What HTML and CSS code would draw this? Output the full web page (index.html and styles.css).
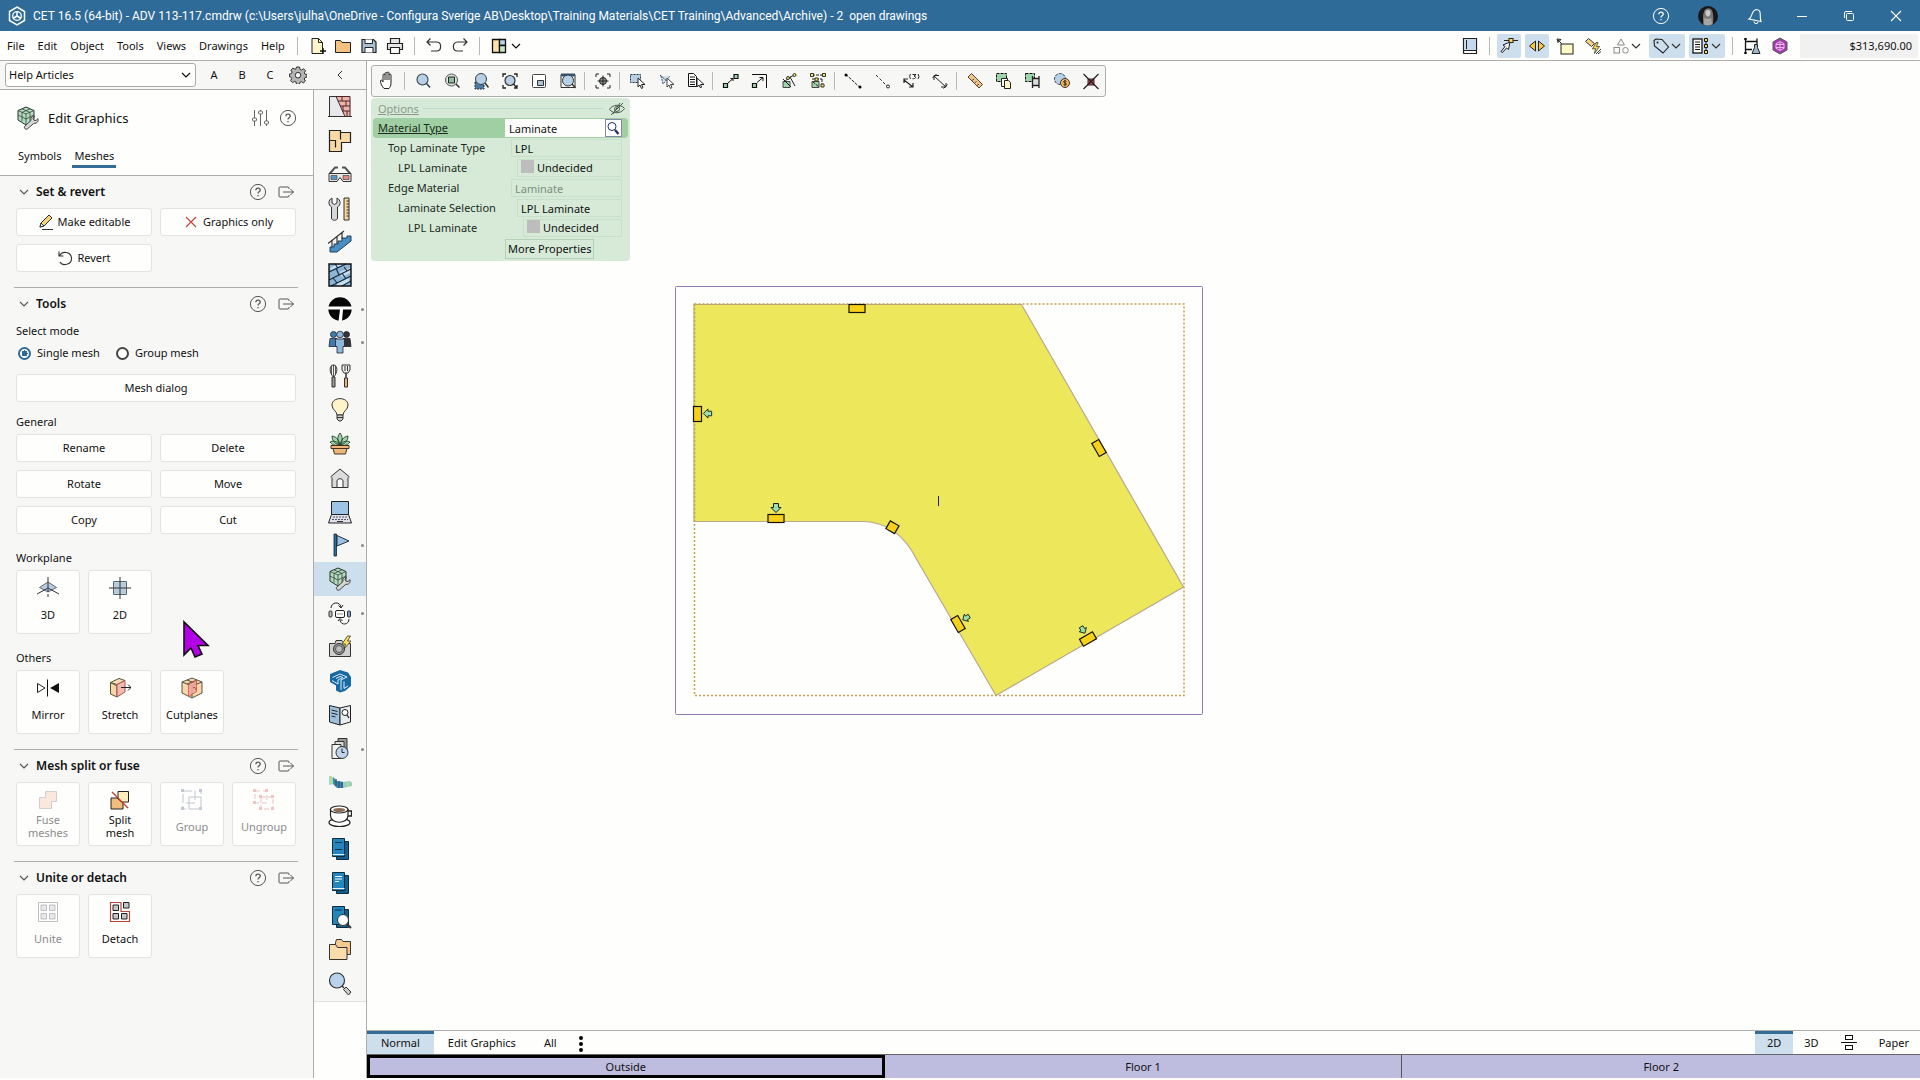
FILE: index.html
```html
<!DOCTYPE html>
<html lang="en">
<head>
<meta charset="utf-8">
<title>CET 16.5 (64-bit)</title>
<link rel="stylesheet" href="styles.css">
</head>
<body>
<svg class="defs" aria-hidden="true">
  <symbol id="help" viewBox="0 0 18 18"><g fill="none" stroke="currentColor"><circle cx="9" cy="9" r="7.6"/><path d="M6.9 7.2c0-2.8 4.3-2.8 4.3 0 0 1.700-2.200 1.500-2.200 3.300M9 12v1.300" stroke-width="1.300"/></g></symbol>
  <symbol id="export" viewBox="0 0 18 18"><path d="M12 6V5q0-1-1-1H3Q2 4 2 5v8q0 1 1 1h8q1 0 1-1v-1M6 9h10.500M13.500 6l3 3-3 3" fill="none" stroke="currentColor"/></symbol>
  <symbol id="down" viewBox="0 0 12 12"><path d="M2 4l4 4 4-4" fill="none" stroke="currentColor" stroke-width="1.200"/></symbol>
  <symbol id="cubewrench" viewBox="0 0 24 24"><path d="M10 1l8 3.500v9L10 19l-8-5V4.500z" fill="#b5dcc0" stroke="#26352c" stroke-width="1"/><path d="M2 4.500L10 8l8-3.500M10 8v11M6 2.800l8 3.700v9M14 2.800L6 6.500v9M2 9l8 4 8-4" fill="none" stroke="#33463a" stroke-width=".8"/><path d="M8.500 20.500l6.500-6c-.7-2.500 1-4.500 3.500-4.300l-1.500 2.300 1 1.800 2.300.2 1.500-2c1.200 2.800-.8 5.200-4 4.800l-6.500 5.700c-1.500 1-3.500-.9-2.800-2.500z" fill="#d5d9d6" stroke="#444" stroke-width="1"/></symbol>
  <symbol id="lens" viewBox="0 0 20 20"><circle cx="9.500" cy="8.500" r="5.500" fill="#b7d0e6" stroke="#33414c" stroke-width="1.100"/><path d="M13.500 12.500L17 16.500" stroke="#33414c" stroke-width="1.500"/></symbol>
  <symbol id="arrow" viewBox="0 0 12 12"><path d="M6 10.500L1 5.500h2.500v-4h5v4H11z" fill="#9fdcae" stroke="#10261a"/></symbol>
</svg>

<header class="titlebar">
  <svg class="logo" width="18" height="20" viewBox="0 0 18 20"><path d="M9 1l7.500 4.500v9L9 19l-7.500-4.500v-9z" fill="none" stroke="#fff" stroke-width="1.500"/><circle cx="9" cy="10" r="4.300" fill="none" stroke="#fff" stroke-width="1.300"/><path d="M9 10V5.500M9 10l-4 2.500M9 10l4 2.500" stroke="#fff" stroke-width="1.500"/></svg>
  <h1 class="title">CET 16.5 (64-bit) - ADV 113-117.cmdrw (c:\Users\julha\OneDrive - Configura Sverige AB\Desktop\Training Materials\CET Training\Advanced\Archive) - 2&nbsp; open drawings</h1>
  <div class="window-tools">
    <button aria-label="Help"><svg width="18" height="18"><use href="#help"/></svg></button>
    <button aria-label="Account"><svg width="20" height="20" viewBox="0 0 20 20"><circle cx="10" cy="10" r="10" fill="#171717"/><path d="M5.500 18c-1-5-.5-11 1-13.500 2-3 6-3 7.500 0 1.500 3 1.500 9 1 13.500-3 2.500-7 2.500-9.500 0z" fill="#777"/><path d="M7.500 5.500c1-2 4-2 4.800 0 .4 3-.6 5-2.300 5S7.200 8.500 7.500 5.500z" fill="#c9c9c9"/><path d="M6.500 12l3.500 1 3-1 1 6c-2 1.500-6 1.500-8.500.5z" fill="#a5a5a5"/></svg></button>
    <button aria-label="Notifications"><svg width="18" height="18" viewBox="0 0 18 18"><path d="M3 12C7 10 5 3 10.500 2.500c6 .5 2.500 7 4.500 12zM8 14.500c.5 2.500 3.500 2.800 4 .5" fill="none" stroke="#fff" stroke-width="1.100"/></svg></button>
    <button aria-label="Minimize"><svg width="12" height="12"><path d="M1 6.500h10" stroke="#fff"/></svg></button>
    <button aria-label="Restore"><svg width="12" height="12" fill="none" stroke="#fff"><rect x="3.500" y="3.500" width="7" height="7" rx="1"/><path d="M1.500 8V3q0-1.500 1.500-1.500h6"/></svg></button>
    <button aria-label="Close"><svg width="12" height="12"><path d="M1 1l10 10M11 1L1 11" stroke="#fff" stroke-width="1.100"/></svg></button>
  </div>
</header>

<nav class="menubar">
  <div class="menus">
    <button>File</button><button>Edit</button><button>Object</button><button>Tools</button><button>Views</button><button>Drawings</button><button>Help</button>
  </div>
  <span class="sep"></span>
  <div class="tools">
    <button aria-label="New"><svg viewBox="0 0 18 18"><path d="M4 1.500h6.500l4 4v11H4z" fill="#fff6cc" stroke="#222"/><path d="M10.500 1.500v4h4" fill="none" stroke="#222"/><path d="M15 11v6M12 14h6" stroke="#111" stroke-width="1.400"/></svg></button>
    <button aria-label="Open"><svg viewBox="0 0 18 18"><path d="M1.500 3.500h5l1.500 2h8.500v10h-15z" fill="#f2c27e" stroke="#222"/></svg></button>
    <button aria-label="Save"><svg viewBox="0 0 18 18"><path d="M2 2.500h11.500L16 5v10.500H2z" fill="#a9bfd2" stroke="#222" stroke-width="1.200"/><path d="M5 2.500v4h7.500v-4M5 15.500v-5h8v5" fill="#fff" stroke="#222"/></svg></button>
    <button aria-label="Print"><svg viewBox="0 0 18 18"><path d="M4.500 6.500v-5h9v5M4 12.500H1.500v-6h15v6H14" fill="#e6e6e6" stroke="#222" stroke-width="1.200"/><path d="M4.500 10.500h9v6h-9z" fill="#fff" stroke="#222" stroke-width="1.200"/></svg></button>
  </div>
  <span class="sep"></span>
  <div class="tools">
    <button aria-label="Undo"><svg viewBox="0 0 18 18"><path d="M5.500 1.500L2 5l3.500 3.500M2 5h9.500c5.500 0 5.500 9 0 9H6" fill="none" stroke="#333" stroke-width="1.200"/></svg></button>
    <button aria-label="Redo"><svg viewBox="0 0 18 18"><path d="M12.500 1.500L16 5l-3.500 3.500M16 5H6.500c-5.500 0-5.500 9 0 9H12" fill="none" stroke="#333" stroke-width="1.200"/></svg></button>
  </div>
  <span class="sep"></span>
  <button class="split" aria-label="Layout"><svg width="18" height="18" viewBox="0 0 18 18"><path d="M2.500 2.500h7v13h-7z" fill="#ffe3a6" stroke="#111" stroke-width="1.300"/><path d="M9.500 2.500h6v6h-6z" fill="#b8d3ea" stroke="#111" stroke-width="1.300"/><path d="M9.500 8.500h6v7h-6z" fill="#c9e4c9" stroke="#111" stroke-width="1.300"/></svg><svg width="12" height="12"><use href="#down"/></svg></button>

  <div class="right-tools">
    <button aria-label="Catalogue"><svg viewBox="0 0 18 18"><path d="M2.500 1.500h13v15h-12q-1 0-1-1z" fill="#fff" stroke="#222" stroke-width="1.200"/><path d="M3 2h12v11H3z" fill="#c4daec"/><path d="M2.500 13.500h13M5.500 12v-9" stroke="#222"/></svg></button>
    <span class="sep"></span>
    <button class="on" aria-label="Snap"><svg viewBox="0 0 18 18"><path d="M4 3.500h14" stroke="#222"/><rect x="9" y="1.500" width="4" height="4" fill="#ffd84a" stroke="#222"/><path d="M10 5L3 8l2 1.500-4 5 1.500 1 4-4.500 2 1.500z" fill="#eef" stroke="#222"/></svg></button>
    <button class="on" aria-label="Handles"><svg viewBox="0 0 18 18"><path d="M7.500 4v10L1.500 9zM10.500 4v10l6-5z" fill="#f8c93d" stroke="#222"/></svg></button>
    <button aria-label="Label"><svg viewBox="0 0 18 18"><rect x="5" y="7" width="12" height="10" fill="#fff9c6" stroke="#222"/><path d="M2 3l4 4M1 2l4 .5L2 5.500z" stroke="#222" fill="#ddd"/></svg></button>
    <button aria-label="Quick apply"><svg viewBox="0 0 18 18"><path d="M1.500 4.500l3-3 6 5-3 3z" fill="#f5d488" stroke="#333"/><path d="M12 5.500L8.500 12l3-.5-1 5 5-7h-3l1.500-4z" fill="#ffd84a" stroke="#333" stroke-width=".8"/><path d="M12 17l5-5M14 17l3-2.500" stroke="#333"/></svg></button>
    <button class="split" aria-label="Shapes"><svg viewBox="0 0 18 18"><g fill="none" stroke="#888"><path d="M9 2l3.500 6h-7z"/><rect x="2" y="10.500" width="5.500" height="5.500"/><circle cx="13.500" cy="13.300" r="2.800"/></g></svg><svg width="12" height="12"><use href="#down"/></svg></button>
    <button class="on split" aria-label="Tags"><svg viewBox="0 0 18 18"><path d="M2 3.500L4 2l6 .5 6.500 7.500-5.500 6L2.500 9z" fill="none" stroke="#222" stroke-width="1.100"/><circle cx="5.500" cy="5.500" r="1" fill="#222"/></svg><svg width="12" height="12"><use href="#down"/></svg></button>
    <button class="on split" aria-label="Lists"><svg viewBox="0 0 18 18"><rect x="1" y="2" width="9" height="14" fill="#fff" stroke="#111" stroke-width="1.300"/><path d="M3 5h5M3 7.500h5M3 10h5M3 12.500h5" stroke="#111"/><path d="M14 2v14" stroke="#111"/><path d="M12.500 1.500h3v3h-3zM12.500 7.500h3v3h-3zM12.500 13.500h3v3h-3z" fill="#ffe24a" stroke="#111"/></svg><svg width="12" height="12"><use href="#down"/></svg></button>
    <span class="sep"></span>
    <button aria-label="Lab"><svg viewBox="0 0 18 18"><path d="M2.500 1v16M1 2h3M1 16h3M2.500 4.500H14M2.500 12.500H9M14 1.500v6" stroke="#111" stroke-width="1.300"/><path d="M11.500 7.500h3v3l2.500 6H9l2.500-6z" fill="#9eb6d0" stroke="#222"/></svg></button>
    <button aria-label="Store"><svg viewBox="0 0 18 18"><path d="M9 1l7 4v8l-7 4-7-4V5z" fill="#a03db0" stroke="#555"/><path d="M9 4.500l4 2.300v4.400l-4 2.300-4-2.300V6.800zM5 7.500h8M5 10.500h8M9 5v8" fill="none" stroke="#efb6f0"/></svg></button>
    <output class="price">$313,690.00</output>
  </div>
</nav>

<div class="workspace">
  <section class="dock">
    <div class="dock-bar">
      <select aria-label="Toolbox"><option>Help Articles</option></select>
      <svg class="select-arrow" width="12" height="12"><use href="#down"/></svg>
      <button>A</button><button>B</button><button>C</button>
      <button aria-label="Settings"><svg width="18" height="18" viewBox="0 0 18 18"><path d="M7.500 1h3l.5 2.300 1.500.7 2.200-1.200 1.800 2-1.200 2 .6 1.200 2.100.5v2.500l-2.200.6-.6 1.400 1.200 2-2 1.900-2-1.200-1.500.6-.4 2H7.500L7 16l-1.500-.6-2 1.200-2-2 1.200-2-.5-1.300L.5 10.700V8l2-.5.6-1.500-1.200-2 2-1.900L6 3.300l1-.5z" fill="#b5b5b5" stroke="#333"/><circle cx="9" cy="9.200" r="2.800" fill="#f2f2f2" stroke="#333"/></svg></button>
      <button class="collapse" aria-label="Collapse"><svg width="10" height="12"><path d="M7 2L3 6l4 4" fill="none" stroke="#333"/></svg></button>
    </div>

    <div class="dock-body">
      <aside class="panel">
        <div class="panel-head">
          <div class="panel-title">
            <svg width="24" height="24"><use href="#cubewrench"/></svg>
            <h2>Edit Graphics</h2>
            <button aria-label="Adjust"><svg width="18" height="18" viewBox="0 0 18 18"><g fill="none" stroke="#666"><path d="M3.500 1v8M3.500 12v5M9.500 1v1M9.500 5v12M15.500 1v11M15.500 15v2"/><rect x="1.500" y="9" width="4" height="3" rx="1"/><rect x="7.500" y="2" width="4" height="3" rx="1"/><rect x="13.500" y="12" width="4" height="3" rx="1"/></g></svg></button>
            <button aria-label="Help"><svg width="18" height="18"><use href="#help"/></svg></button>
          </div>
          <div class="tabs"><button>Symbols</button><button class="active">Meshes</button></div>
        </div>

        <section class="group">
          <header><svg width="12" height="12"><use href="#down"/></svg><h3>Set &amp; revert</h3><button aria-label="Help"><svg width="18" height="18"><use href="#help"/></svg></button><button aria-label="Detach section"><svg width="18" height="18"><use href="#export"/></svg></button></header>
          <div class="pair">
            <button class="btn"><svg width="16" height="16" viewBox="0 0 16 16"><path d="M2 13l1-4 8-8 3 3-8 8z" fill="#f3d37c" stroke="#333"/><path d="M2 13l1-4 3 3z" fill="#fff" stroke="#333"/><path d="M4 15.500h11" stroke="#333"/></svg>Make editable</button>
            <button class="btn"><svg width="16" height="16" viewBox="0 0 16 16"><path d="M3 3l10 10M13 3L3 13" stroke="#c5483c" stroke-width="1.200"/></svg>Graphics only</button>
            <button class="btn"><svg width="16" height="16" viewBox="0 0 16 16"><path d="M2 1.500v4.500h4.500M2.500 6C5 .5 14 1.500 14.500 8c.3 7-9 8.500-11.500 4" fill="none" stroke="#333" stroke-width="1.100"/></svg>Revert</button>
          </div>
        </section>

        <section class="group">
          <header><svg width="12" height="12"><use href="#down"/></svg><h3>Tools</h3><button aria-label="Help"><svg width="18" height="18"><use href="#help"/></svg></button><button aria-label="Detach section"><svg width="18" height="18"><use href="#export"/></svg></button></header>
          <h4>Select mode</h4>
          <div class="radios">
            <label><input type="radio" name="mode" checked>Single mesh</label>
            <label><input type="radio" name="mode">Group mesh</label>
          </div>
          <button class="btn wide">Mesh dialog</button>
          <h4 class="tight">General</h4>
          <div class="pair">
            <button class="btn">Rename</button><button class="btn">Delete</button>
            <button class="btn">Rotate</button><button class="btn">Move</button>
            <button class="btn">Copy</button><button class="btn">Cut</button>
          </div>
          <h4 class="spaced">Workplane</h4>
          <div class="tiles">
            <button class="tile"><svg viewBox="0 0 22 22"><path d="M11 5l8.500 5.500L11 15l-8.500-4.500z" fill="#b7cddd" stroke="#5b6a75"/><path d="M11 0v11M11 11l11 6M11 11L0 17" fill="none" stroke="#333"/><path d="M11 12v10" stroke="#333" stroke-dasharray="3 2"/></svg><span>3D</span></button>
            <button class="tile"><svg viewBox="0 0 22 22"><path d="M4.500 4.500h13v13h-13z" fill="#b7cddd" stroke="#5b6a75"/><path d="M11 0v22M0 11h22" stroke="#333"/></svg><span>2D</span></button>
          </div>
          <h4 class="spaced">Others</h4>
          <div class="tiles">
            <button class="tile"><svg viewBox="0 0 22 22"><path d="M.5 6.500L8 11l-7.500 4.500z" fill="#fff" stroke="#222"/><path d="M22 6v10l-9-5z" fill="#111"/><path d="M10.500 2.500v17" stroke="#111"/></svg><span>Mirror</span></button>
            <button class="tile"><svg viewBox="0 0 22 22"><path d="M1.500 5.500L8 9v11l-6.500-3z" fill="#f8d6a8" stroke="#553"/><path d="M1.500 5.500L10 1.500l6 2L8 7.500z" fill="#f8dfb8" stroke="#553"/><path d="M8 7.500l8-4V15l-8 5z" fill="#f4b9ae" stroke="#a55"/><path d="M12 10.500h10M19 7.500l3 3-3 3" fill="none" stroke="#222"/></svg><span>Stretch</span></button>
            <button class="tile"><svg viewBox="0 0 22 22"><path d="M11 1l10 4v11l-10 5-10-5V5z" fill="#f8d6a8" stroke="#554"/><path d="M1 5l10 4 10-4M11 9v12M6 3l10 4M16 3L6 7" fill="none" stroke="#554"/><path d="M7.500 7.500l8-4v11l-8 5z" fill="#f0a79c" stroke="#c55" opacity=".85"/><path d="M12 11l3-1v5" fill="none" stroke="#a33" stroke-dasharray="2"/></svg><span>Cutplanes</span></button>
          </div>
        </section>

        <section class="group">
          <header><svg width="12" height="12"><use href="#down"/></svg><h3>Mesh split or fuse</h3><button aria-label="Help"><svg width="18" height="18"><use href="#help"/></svg></button><button aria-label="Detach section"><svg width="18" height="18"><use href="#export"/></svg></button></header>
          <div class="tiles">
            <button class="tile" disabled><svg viewBox="0 0 22 22"><path d="M8.500 2.500h11v10h-5v7h-12v-11h6z" fill="#f7c9ad" stroke="#888"/></svg><span>Fuse<br>meshes</span></button>
            <button class="tile"><svg viewBox="0 0 22 22"><path d="M9 2.500h10.500V13H9z" fill="#ffedbd" stroke="#222"/><path d="M2 9h6l6 5v6H2z" fill="#f0bd7c" stroke="#222"/><path d="M3 3l16 16" stroke="#b73b31" stroke-width="1.300"/></svg><span>Split<br>mesh</span></button>
            <button class="tile" disabled><svg viewBox="0 0 22 22"><g fill="none" stroke="#6b7a90"><path d="M2 2h12v12H2z" stroke-dasharray="9 3"/><path d="M8 8h12v12H8z"/><path d="M18 2h2v3M2 17v3h3"/></g><path d="M0 0h3v3H0zM18 0h3v3h-3zM0 18h3v3H0zM18 18h3v3h-3z" fill="#6b7a90"/></svg><span>Group</span></button>
            <button class="tile" disabled><svg viewBox="0 0 22 22"><g fill="none" stroke="#e07070"><path d="M2 2h12v12H2z" stroke-dasharray="5 3"/><path d="M8 8h12v12H8z" stroke-dasharray="5 2"/></g><path d="M0 0h3v3H0zM12 0h3v3h-3zM0 12h3v3H0zM18 6h3v3h-3zM6 6h3v3H6zM6 18h3v3H6zM18 18h3v3h-3z" fill="#e07070"/></svg><span>Ungroup</span></button>
          </div>
        </section>

        <section class="group">
          <header><svg width="12" height="12"><use href="#down"/></svg><h3>Unite or detach</h3><button aria-label="Help"><svg width="18" height="18"><use href="#help"/></svg></button><button aria-label="Detach section"><svg width="18" height="18"><use href="#export"/></svg></button></header>
          <div class="tiles">
            <button class="tile" disabled><svg viewBox="0 0 22 22"><path d="M1.500 1.500h19v19h-19z" fill="none" stroke="#667"/><path d="M4 4h5.500v5.500H4zM12.500 4H18v5.500h-5.500zM4 12.500h5.500V18H4zM12.500 12.500H18V18h-5.500z" fill="#ccc" stroke="#667"/></svg><span>Unite</span></button>
            <button class="tile"><svg viewBox="0 0 22 22"><path d="M1.500 1.500H12v9h8.500v10h-19z" fill="none" stroke="#b8473b" stroke-width="1.200"/><path d="M4 4h5.500v5.500H4zM14.500 1.500H20v5.500h-5.500zM4 12.500h5.500V18H4zM12.500 12.500H18V18h-5.500z" fill="#c6c6c6" stroke="#222"/></svg><span>Detach</span></button>
          </div>
        </section>
      </aside>

      <nav class="rail">
        <div class="rail-group">
          <button aria-label="Walls"><svg viewBox="0 0 24 24"><path d="M1 1.500h22v20H1z" fill="#e9e9ec"/><path d="M8 1.500h14v20h-5z" fill="#f0b3ab"/><path d="M8 1.500h14v20M10 6h12M12 11h10M14 16h8M14 2v4M18 6v5M15 11v5M19 16v5" fill="none" stroke="#4a2524"/><path d="M1.500 21V1.500H8L17 21.500M0 21.500h24" fill="none" stroke="#333"/></svg></button>
          <button aria-label="Floors"><svg viewBox="0 0 24 24"><path d="M1.500 1.500h11v2h10v10h-9v9h-12z" fill="#f9d9a4" stroke="#222" stroke-width="1.200"/><path d="M12.500 3.500v7M7.500 18.500v-7h-6" fill="none" stroke="#222" stroke-width="1.200"/></svg></button>
          <button aria-label="3D glasses"><svg viewBox="0 0 24 24"><path d="M1.500 11L7 4.500h3M22.500 11L17 4.500h-3" fill="none" stroke="#555" stroke-width="2"/><path d="M1 10.500h22v8h-8l-3-4-3 4H1z" fill="#e8e8e8" stroke="#333"/><path d="M3 12.500h6v4H3z" fill="#5b9ac8" stroke="#333" stroke-width=".6"/><path d="M15 12.500h6v4h-6z" fill="#e58b80" stroke="#333" stroke-width=".6"/></svg></button>
          <button aria-label="Tools"><svg viewBox="0 0 24 24"><path d="M4 1v5l2.500 1.500L9 6V1c4 2 4 7 .5 9v11c0 3-6 3-6 0V10C0 8 0 3 4 1z" fill="#d6d9dc" stroke="#333"/><path d="M16 1h5v22h-5z" fill="#f7d79b" stroke="#333"/><path d="M18.500 4H21M18.500 7H21M18.500 10H21M18.500 13H21M18.500 16H21M18.500 19H21" stroke="#333"/></svg></button>
        </div>
        <div class="rail-group">
          <button aria-label="Stairs"><svg viewBox="0 0 24 24"><path d="M2 20v-3h4v-3h4v-3h4V8h5V6h4v5L9 22H2z" fill="#4a8fc4" stroke="#1e3e58"/><path d="M0 13.500L16 1M4 10.500V17M9 7v7M14 3v6" stroke="#333" stroke-width="1.200"/></svg></button>
        </div>
        <div class="rail-group">
          <button aria-label="Flooring"><svg viewBox="0 0 24 24"><path d="M1 1h22v22H1z" fill="#8bb4d6"/><path d="M12 9l10-4v5l-8 4zM2 5l8-4h6L3 7zM9 20l12-5v5l-6 3H9z" fill="#c7ddf0"/><path d="M1 9l17-8M1 17L23 6M3 23l20-10M14 23l9-5M7 1l3 4M16 4l3 4M8 5l3 7M5 15l4 5M14 10l4 6" stroke="#152736" stroke-width="1.100" fill="none"/><path d="M1 1h22v22H1z" fill="none" stroke="#111" stroke-width="1.400"/></svg></button>
          <button class="more" aria-label="Brand T"><svg viewBox="0 0 24 24"><circle cx="12" cy="12" r="11.700" fill="#060606"/><path d="M0 9.500h24v3h-9L14 24h-3.500l1.500-11.500H0z" fill="#fff"/></svg></button>
        </div>
        <div class="rail-group">
          <button class="more" aria-label="People"><svg viewBox="0 0 24 24"><g stroke="#223" stroke-width=".8"><circle cx="5.500" cy="4.500" r="3" fill="#3f7cab"/><path d="M2 8.500h7v8H1z" fill="#3f7cab"/><circle cx="18.500" cy="4.500" r="3" fill="#333"/><path d="M15 8.500h7l1 8h-8z" fill="#333"/><circle cx="12" cy="4.500" r="3.300" fill="#8fb7da"/><path d="M7.500 9h9v7.500H15V23H9v-6.500H7.500z" fill="#8fb7da"/></g></svg></button>
          <button aria-label="Kitchen"><svg viewBox="0 0 24 24"><path d="M5.500 13C1 9 1 1 5.500 1S10 9 5.500 13z" fill="#eee" stroke="#333"/><path d="M5.500 1v12M3.500 2v8M7.500 2v8" stroke="#333" stroke-width=".8"/><path d="M4 13h3v10H4z" fill="#999" stroke="#333"/><path d="M14 1h8v5l-2 3h-4l-2-3z" fill="#eee" stroke="#333"/><path d="M17 2v5M19.500 2v5" stroke="#333"/><path d="M18 9v5" stroke="#333" stroke-width="1.500"/><path d="M16.500 14h3v9h-3z" fill="#efb16f" stroke="#333"/></svg></button>
          <button aria-label="Lighting"><svg viewBox="0 0 24 24"><path d="M9 17c0-4-5-5-5-10C4-1.500 20-1.500 20 7c0 5-5 6-5 10z" fill="#fff3c9" stroke="#333"/><path d="M9 17h6v4l-2 2h-2l-2-2zM9 19.500h6" fill="#ccc" stroke="#333"/></svg></button>
          <button aria-label="Plants"><svg viewBox="0 0 24 24"><path d="M12 13C9 9 9 5 12 1c3 4 3 8 0 12zM12 13C7 12 4 9 4 4c5 1 7 4 8 9zM12 13c5-1 8-4 8-9-5 1-7 4-8 9zM11 13c-4 1-7 0-9-3 4-2 8 0 9 3zM13 13c4 1 7 0 9-3-4-2-8 0-9 3z" fill="#9fd3a9" stroke="#24402b" stroke-width=".9"/><path d="M3 13.500h18v3H3zM5 16.500h14L17.500 22h-11z" fill="#efb777" stroke="#443020"/></svg></button>
          <button aria-label="House"><svg viewBox="0 0 24 24"><path d="M4 10v11.500h16V10" fill="#dcdcdc" stroke="#333"/><path d="M3 11.500V10.500L12 3l9 7.500v1" fill="#dcdcdc" stroke="#333"/><path d="M9 21.500V15c0-3 6-3 6 0v6.500z" fill="#fff" stroke="#333"/></svg></button>
          <button aria-label="Electronics"><svg viewBox="0 0 24 24"><path d="M3.500 1.500h17v13h-17z" fill="#9dc3e6" stroke="#222"/><path d="M3.500 14.500h17L23.500 23H.5z" fill="#e0e0e8" stroke="#222"/><path d="M5 17h14M4 19.500h16" stroke="#556" stroke-dasharray="2 1"/><path d="M9 21.500h6" stroke="#333"/></svg></button>
        </div>
        <div class="rail-group">
          <button class="more" aria-label="Flag"><svg viewBox="0 0 24 24"><path d="M9 2.500L21 8 9 13z" fill="#9fc0e2" stroke="#234"/><path d="M6 1h2.500v22H6z" fill="#2a6f9c" stroke="#13222e" stroke-width=".8"/></svg></button>
          <button class="current" aria-label="Edit Graphics"><svg><use href="#cubewrench"/></svg></button>
          <button class="more" aria-label="Swap"><svg viewBox="0 0 24 24"><rect x="1" y="10" width="3" height="6" rx="1" fill="#bbb" stroke="#333"/><rect x="7.500" y="9.500" width="9" height="7" rx="1.500" fill="#fff" stroke="#222"/><path d="M9.500 13h5" stroke="#222" stroke-dasharray="1"/><rect x="19.500" y="10" width="3" height="6" rx="1" fill="#7aa0d0" stroke="#333"/><path d="M3 7c0-6 9-7 10-1M10.500 4.500L13 7l2-3M21 18c0 6-8 7-9 1M10 20l2-2.500 2.500 2.500" fill="none" stroke="#222"/></svg></button>
          <button aria-label="Render"><svg viewBox="0 0 24 24"><path d="M1.500 8.500v13h21v-13H16l-2-3H8l-1 3z" fill="#cfcfcf" stroke="#333"/><circle cx="11" cy="14" r="5.500" fill="#9a9a9a" stroke="#333"/><circle cx="11" cy="14" r="3.500" fill="#bdbdbd" stroke="#555"/><path d="M19.500 1l-5.500 8h3.500L16 14l7-8h-3.500l3-5z" fill="#ffe056" stroke="#333" stroke-width=".8"/></svg></button>
          <button aria-label="SketchUp"><svg viewBox="0 0 24 24"><path d="M12 1l8 2.500 3 4.500v9l-6 5-5 1.500-4-2v-5l-6-3.500V5z" fill="#1769a5"/><path d="M4.500 8.500L12 5l7 3-6 3v10M8 9.500l4-2 3 1-5 2.500v4l-6-3.500M16 12.500v7l4-2.500" fill="none" stroke="#dfeefa" stroke-width="1"/></svg></button>
          <button aria-label="Catalogue"><svg viewBox="0 0 24 24"><path d="M1.500 2.500L12 5v17L1.500 19z" fill="#9dc0de" stroke="#222"/><path d="M12 5l10.500-2.500V19L12 22z" fill="#e9edf0" stroke="#222"/><path d="M3.500 7l6 1.500M3.500 10l6 1.500M3.500 13l4 1" stroke="#222"/><circle cx="17" cy="9.500" r="3" fill="#fff" stroke="#222"/><path d="M19 12l2 3" stroke="#222" stroke-width="1.300"/></svg></button>
          <button class="more" aria-label="History"><svg viewBox="0 0 24 24"><path d="M10 1.500h9v12h-9z" fill="#999" stroke="#333"/><path d="M7 4.500h9v12H7z" fill="#ddd" stroke="#333"/><path d="M4 7.500h9v14H4z" fill="#f2f2f2" stroke="#333"/><circle cx="14" cy="15.500" r="6" fill="#bdd4ea" stroke="#333"/><path d="M14 11.500v4h2.500" fill="none" stroke="#222"/></svg></button>
        </div>
        <div class="rail-group">
          <button aria-label="Material wave"><svg viewBox="0 0 24 24"><path d="M1 6l4 1 3 4-2 3-5 1z" fill="#9ad6de"/><path d="M5 7l4 4 7 1v6H9l-4-4z" fill="#3f8ba3"/><path d="M8 9v7M11 11v7M14 12v6" stroke="#2a5a82" stroke-width="1.300"/><path d="M15 12l7-1 2 2v3l-9 2z" fill="#93cfc6"/><path d="M3 6v8M20 12v5" stroke="#c9db6c" stroke-width="1.500"/></svg></button>
          <button aria-label="Cafe"><svg viewBox="0 0 24 24"><path d="M20 7h3.500v5H20" fill="none" stroke="#222" stroke-width="1.300"/><ellipse cx="11.500" cy="18.500" rx="10.500" ry="4" fill="#fff" stroke="#222" stroke-width="1.200"/><path d="M2.500 5.500v6c0 9 17.500 9 17.500 0v-6z" fill="#fff" stroke="#222" stroke-width="1.200"/><ellipse cx="11.200" cy="5.500" rx="8.800" ry="3.500" fill="#fff" stroke="#222" stroke-width="1.200"/><ellipse cx="11.200" cy="6" rx="6" ry="2" fill="#8c6b57"/></svg></button>
        </div>
        <div class="rail-group">
          <button aria-label="Library 1"><svg viewBox="0 0 24 24"><path d="M8.500 4.500h12v18h-12z" fill="#155f8a" stroke="#0e2c40"/><path d="M4.500 1.500h12v18h-12z" fill="#2386bd" stroke="#0e2c40"/><path d="M4.500 17.500h12" stroke="#eee"/><path d="M7 5.500h7M7 12.500h7" stroke="#0f3147"/></svg></button>
          <button aria-label="Library 2"><svg viewBox="0 0 24 24"><path d="M8.500 4.500h12v18h-12z" fill="#155f8a" stroke="#0e2c40"/><path d="M4.500 1.500h12v18h-12z" fill="#2386bd" stroke="#0e2c40"/><path d="M4.500 17.500h12" stroke="#eee"/><path d="M7 5.500h7M7 8h7M7 10.500h4" stroke="#fff"/></svg></button>
          <button aria-label="Library search"><svg viewBox="0 0 24 24"><path d="M8.500 4.500h12v18h-12z" fill="#155f8a" stroke="#0e2c40"/><path d="M4.500 1.500h12v18h-12z" fill="#2386bd" stroke="#0e2c40"/><path d="M7 5h7" stroke="#0f3147"/><circle cx="15" cy="15" r="5.500" fill="#fff" stroke="#333"/><path d="M19 19l4 4" stroke="#333" stroke-width="2"/></svg></button>
        </div>
        <div class="rail-group">
          <button aria-label="Folders"><svg viewBox="0 0 24 24"><path d="M7.500 4.500l1-3h5l1.500 2h7.500v13h-15z" fill="#f3c98e" stroke="#333"/><path d="M1.500 21.500v-15h6l2 3h9.500v12z" fill="#fbdcab" stroke="#333"/></svg></button>
          <button aria-label="Search"><svg viewBox="0 0 24 24"><circle cx="9" cy="8.500" r="7.500" fill="#b8d2ea" stroke="#333" stroke-width="1.200"/><path d="M14 14l2 2" stroke="#333" stroke-width="1.500"/><path d="M15.500 17.500l2.500-2.500 5 5-2.500 3z" fill="#ccc" stroke="#333"/></svg></button>
        </div>
      </nav>
    </div>
  </section>

  <main class="stage">
    <div class="canvas">
      <svg class="drawing" width="529" height="431" viewBox="675 285 529 431">
        <rect x="675.500" y="286.500" width="527" height="428" rx="1" fill="none" stroke="#9678b0"/>
        <path d="M694 304.500H1021.500L1183.500 587 996 695.500 917 560C905 536 888 521.500 862 521.500H694z" fill="#ece75b" stroke="#b9a78e" stroke-width="1.200"/>
        <rect x="694.500" y="304" width="489.500" height="391.500" fill="none" stroke="#c79f4e" stroke-width="1.500" stroke-dasharray="2 2"/>
        <g fill="#f7d117" stroke="#111" stroke-width="1.200">
          <rect x="849" y="304.500" width="16" height="8"/>
          <rect x="693.500" y="406.500" width="8" height="15"/>
          <rect x="768" y="514.500" width="16" height="8"/>
          <rect x="887.500" y="522.500" width="10" height="9" transform="rotate(30 892 527)"/>
          <rect x="1095" y="440.500" width="8" height="15" transform="rotate(-30 1099 448)"/>
          <rect x="954" y="616.500" width="8" height="15" transform="rotate(-30 958 624)"/>
          <rect x="1080.500" y="635" width="15" height="8" transform="rotate(-30 1088 639)"/>
        </g>
        <use href="#arrow" x="702" y="408" width="11" height="11" transform="rotate(90 707.500 413.500)"/>
        <use href="#arrow" x="770" y="502" width="12" height="12"/>
        <use href="#arrow" x="961" y="613" width="10" height="10" transform="rotate(60 966 618)"/>
        <use href="#arrow" x="1078" y="625" width="10" height="10" transform="rotate(-30 1083 630)"/>
        <path d="M938.500 496v10" stroke="#222"/>
      </svg>

      <div class="float-bar">
        <button aria-label="Pan"><svg viewBox="0 0 20 20"><path d="M6 17.500C3 14 2.500 12 2.500 9.500c1-1 2 0 2.500 1.500V4c0-1.300 2-1.300 2 0V2.500c0-1.300 2-1.300 2 0V2c0-1.300 2-1.300 2 0v2c0-1.300 2-1.300 2 0v8c0 3-1 4-2 5.500zM7 4v5M9 3v6M11 4v5" fill="#fff" stroke="#222"/></svg></button>
        <span class="sep"></span>
        <button aria-label="Zoom"><svg><use href="#lens"/></svg></button>
        <button aria-label="Zoom page"><svg viewBox="0 0 20 20"><circle cx="9.500" cy="9" r="6" fill="#dbe6dc" stroke="#555"/><path d="M6.500 6h6v6h-6z" fill="#8fbf98" stroke="#222"/><path d="M14 13l3.500 3.500" stroke="#333" stroke-width="1.500"/></svg></button>
        <button aria-label="Zoom window"><svg viewBox="0 0 20 20"><path d="M4 11h9v7H4z" fill="#4f7aa0" stroke="#234" stroke-dasharray="2 1"/><circle cx="10" cy="8" r="5.500" fill="#b7d0e6" stroke="#33414c"/><path d="M14 12l3.500 4.500" stroke="#333" stroke-width="1.500"/></svg></button>
        <button aria-label="Zoom extents"><svg viewBox="0 0 20 20"><circle cx="10" cy="9.500" r="5" fill="#b7d0e6" stroke="#333" stroke-width="1.200"/><path d="M3 6V3h3M14 3h3v3M3 14v3h3M17 14v3h-3M13.500 13l3 3.500" fill="none" stroke="#222" stroke-width="1.300"/></svg></button>
        <button aria-label="View"><svg viewBox="0 0 20 20"><rect x="3.500" y="3.500" width="13" height="13" rx="1" fill="#fff" stroke="#444"/><path d="M8.500 9.500h6v5h-6z" fill="#a8c4dc" stroke="#333"/></svg></button>
        <button aria-label="Zoom selection"><svg viewBox="0 0 20 20"><path d="M3 16.500V3.500h14v13z" fill="#fff" stroke="#333"/><path d="M3 2.500h14v3H3z" fill="#34556f"/><circle cx="10" cy="9.500" r="5.500" fill="#b7d0e6" stroke="#333"/><path d="M14 13l3.500 4" stroke="#333" stroke-width="1.500"/></svg></button>
        <span class="sep"></span>
        <button aria-label="Center"><svg viewBox="0 0 20 20"><path d="M3 6V3h3M14 3h3v3M3 14v3h3M17 14v3h-3" fill="none" stroke="#222"/><circle cx="10" cy="10" r="3.500" fill="#8a9a8a" stroke="#222"/><path d="M10 4.500v11M4.500 10h11" stroke="#222"/></svg></button>
        <span class="sep"></span>
        <button aria-label="Select window"><svg viewBox="0 0 20 20"><path d="M2.500 3.500h10v8h-10z" fill="#b7d0e6" stroke="#234" stroke-dasharray="2 1"/><path d="M10 7v9l2-2 1.500 3.500 1.500-1-1.500-3H17z" fill="#fff" stroke="#222"/></svg></button>
        <button aria-label="Select touching"><svg viewBox="0 0 20 20"><path d="M4 5l2 8 7-8" fill="#cfe0ee" stroke="#357" stroke-dasharray="2 1"/><path d="M3 4l8 7" stroke="#444" stroke-dasharray="2 1"/><path d="M10 7v9l2-2 1.500 3.500 1.500-1-1.500-3H17z" fill="#fff" stroke="#444"/></svg></button>
        <button aria-label="Select list"><svg viewBox="0 0 20 20"><path d="M2.500 2.500h5l3 3v10h-8z" fill="#fff" stroke="#111"/><path d="M4 6h5M4 8.500h5M4 11h5M4 13.500h5" stroke="#111"/><path d="M11 7v9l2-2 1.500 3 1-1-1-2.500H18z" fill="#fff" stroke="#222"/></svg></button>
        <span class="sep"></span>
        <button aria-label="Move"><svg viewBox="0 0 20 20"><path d="M2.500 12.500h4v4h-4zM13 3.500h4v4h-4z" fill="#9fd3a9" stroke="#111" stroke-width="1.200"/><path d="M7 12l5-4.500M9.500 7.500H12V10" fill="none" stroke="#111"/></svg></button>
        <button aria-label="Move corner"><svg viewBox="0 0 20 20"><path d="M2.500 12.500h4v4h-4z" fill="#9fd3a9" stroke="#111" stroke-width="1.200"/><path d="M2 3.500h14.500V17M7 11.500l6-5M9.500 6.500H13V10" fill="none" stroke="#111"/></svg></button>
        <button aria-label="Attach"><svg viewBox="0 0 20 20"><path d="M4 10.500h7v6H4z" fill="#9fd3a9" stroke="#444"/><path d="M5 11l6-5 5-2M11 6l5 9M4 8l8 8" fill="none" stroke="#222"/><circle cx="15.500" cy="4" r="1.500" fill="#ffe65a" stroke="#333"/><circle cx="9" cy="7" r="1.500" fill="#ffe65a" stroke="#333"/></svg></button>
        <button aria-label="Attach box"><svg viewBox="0 0 20 20"><path d="M4 10.500h7v6H4z" fill="#9fd3a9" stroke="#444"/><path d="M4 4h12M4 8h10M14 8v7M5 11l6 5" fill="none" stroke="#222" stroke-dasharray="3 1"/><path d="M2.500 2.500h3v3h-3zM14.500 2.500h3v3h-3zM13 13h3v3h-3zM7 7h3v3H7z" fill="#ffe65a" stroke="#333"/></svg></button>
        <span class="sep"></span>
        <button aria-label="Line"><svg viewBox="0 0 20 20"><path d="M3 3.500l14 13" stroke="#222" stroke-dasharray="3 1"/><circle cx="3" cy="4" r="1.500"/><circle cx="17" cy="16" r="1.500"/></svg></button>
        <button aria-label="Guide"><svg viewBox="0 0 20 20"><path d="M4 4l12 12" stroke="#333" stroke-dasharray="3 2"/><circle cx="16" cy="15.500" r="1.500" fill="#fff" stroke="#222"/></svg></button>
        <button aria-label="Dimension chain"><svg viewBox="0 0 20 20"><path d="M3 9l9 7M3 12V8h4M12 12v4H8" fill="none" stroke="#222" stroke-width="1.200"/><path d="M9.500 3q-2 2.500 0 5M17 3q2 2.500 0 5M11.500 3.500H15l-2 1.700c2.500 0 2 2.500-.5 2.500h-1" fill="none" stroke="#222"/></svg></button>
        <button aria-label="Dimension"><svg viewBox="0 0 20 20"><path d="M4 5l12 11M4 9V4.500h5M16 12v4h-5M2.500 7l4-4M13.500 17.500l4-4" fill="none" stroke="#222"/></svg></button>
        <span class="sep"></span>
        <button aria-label="Measure"><svg viewBox="0 0 20 20"><path d="M3 6l3.500-3.500 11 11L14 17z" fill="#efc58b" stroke="#543"/><path d="M7 9.500L9 8M9.500 12l2-1.500M12 14.500l2-1.500" stroke="#543"/></svg></button>
        <button aria-label="Copy area"><svg viewBox="0 0 20 20"><path d="M2.500 2.500h10v8h-10z" fill="#9fd3a9" stroke="#111" stroke-dasharray="3 1"/><path d="M7.500 7.500h6v8h-6z" fill="#fff" stroke="#222"/><path d="M10.500 9.500h4l2 2v6h-6z" fill="#fff6cc" stroke="#222"/></svg></button>
        <button aria-label="Clip area"><svg viewBox="0 0 20 20"><path d="M2.500 2.500h9v8h-9z" fill="#9fd3a9" stroke="#111" stroke-dasharray="3 1"/><path d="M9.500 8h6.500v6.500H9.500z" fill="#ddd"/><path d="M9.500 5v12M16 5v12M9.500 7.500H16M9.500 14.500H16" stroke="#222" stroke-width="1.300"/></svg></button>
        <button aria-label="Price area"><svg viewBox="0 0 20 20"><circle cx="8" cy="8" r="5.500" fill="#b7d0e6" stroke="#345" stroke-dasharray="3 1"/><circle cx="13" cy="12" r="4.500" fill="#f5b95c" stroke="#333"/><path d="M14.500 10.500c-1-1-3-.7-3 .5s3 .8 3 2-2 1.400-3 .4M13 9v6" fill="none" stroke="#222" stroke-width=".9"/></svg></button>
        <button aria-label="Delete point"><svg viewBox="0 0 20 20"><rect x="7" y="8" width="6" height="6" fill="#b04a55" stroke="#522"/><path d="M2.500 3l15 15M17.500 3l-15 15" stroke="#222" stroke-width="1.200"/></svg></button>
      </div>

      <form class="options">
        <div class="options-head"><a href="#options">Options</a><span></span><svg width="18" height="14" viewBox="0 0 18 14"><path d="M1.500 7.500C4.500 2 13 2 16.500 6.500 13 12 5 12 1.500 7.500zM15 1L3 13M12 1L5 12" fill="none" stroke="#4b5c4e"/><circle cx="9" cy="7" r="2.500" fill="none" stroke="#4b5c4e"/></svg></div>
        <div class="row selected"><label for="mt">Material Type</label><input id="mt" value="Laminate"><button type="button" aria-label="Browse"><svg width="14" height="16" viewBox="0 0 14 16"><circle cx="6" cy="6.500" r="4" fill="#fff" stroke="#1d2c66"/><path d="M9 10l3.500 4" stroke="#1d2c66" stroke-width="2.200"/></svg></button></div>
        <div class="row in1"><label for="tl">Top Laminate Type</label><input id="tl" value="LPL"></div>
        <div class="row in2"><label for="l1">LPL Laminate</label><button type="button" id="l1"><i></i>Undecided</button></div>
        <div class="row in1"><label for="em">Edge Material</label><input id="em" value="Laminate" disabled></div>
        <div class="row in2"><label for="ls">Laminate Selection</label><input id="ls" value="LPL Laminate"></div>
        <div class="row in3"><label for="l2">LPL Laminate</label><button type="button" id="l2"><i></i>Undecided</button></div>
        <button type="button" class="more-props">More Properties</button>
      </form>
    </div>

    <div class="viewbar">
      <button class="active">Normal</button><button>Edit Graphics</button><button>All</button>
      <button class="dots" aria-label="More views"><svg width="4" height="18"><circle cx="2" cy="3" r="2"/><circle cx="2" cy="9" r="2"/><circle cx="2" cy="15" r="2"/></svg></button>
      <div class="modes">
        <button class="active">2D</button><button>3D</button>
        <button aria-label="Split view"><svg width="16" height="18" fill="none" stroke="#111"><path d="M0 8.500h16"/><rect x="4.500" y="1.500" width="7" height="4"/><rect x="4.500" y="11.500" width="7" height="4"/></svg></button>
        <button>Paper</button>
      </div>
    </div>
    <div class="floors">
      <button class="active">Outside</button><button>Floor 1</button><button>Floor 2</button>
    </div>
  </main>
</div>

<svg class="pointer" width="28" height="40" viewBox="0 0 28 40"><path d="M2 2v33l7-7 4 9 7-3-4-8.500H26z" fill="#b400e6" stroke="#111" stroke-width="1.600"/></svg>
</body>
</html>
```
FILE: styles.css
```css
* { box-sizing: border-box; }
html, body { height: 100%; }
body {
  margin: 0;
  padding-bottom: 2px;
  display: flex;
  flex-direction: column;
  overflow: hidden;
  background: #fefefd;
  color: #111;
  font: 11px/16px "Noto Sans", "Open Sans", sans-serif;
}
button, input, select { font: inherit; color: inherit; margin: 0; }
button { border: 0; padding: 0; background: none; }
button svg { display: block; }
h1, h2, h3, h4 { margin: 0; font: inherit; }
.defs { position: absolute; width: 0; height: 0; }

/* Title bar */
.titlebar { flex: none; height: 31px; display: flex; align-items: center; background: #2f6b98; color: #fff; padding-left: 8px; }
.title { margin-left: 7px; font: 12px/16px Roboto, "Noto Sans", sans-serif; white-space: nowrap; }
.window-tools { margin-left: auto; display: flex; align-items: center; height: 100%; padding-right: 1px; }
.window-tools button { width: 47px; height: 100%; display: flex; align-items: center; justify-content: center; }

/* Menu bar */
.menubar { flex: none; height: 30px; display: flex; align-items: center; border-bottom: 1px solid #adadad; padding: 0 2px 0 7px; }
.menus { display: flex; gap: 13px; margin-right: 12px; }
.sep { width: 1px; height: 18px; background: #b9b9b9; }
.tools { display: flex; gap: 8px; margin: 0 10px; }
.tools svg, .right-tools button svg:first-child { width: 18px; height: 18px; }
.split { display: flex; align-items: center; }
.menubar > .split { margin-left: 10px; gap: 2px; }
.right-tools { margin-left: auto; display: flex; align-items: center; gap: 4px; color: #333; }
.right-tools button { height: 24px; width: 24px; display: flex; align-items: center; justify-content: center; border-radius: 2px; }
.right-tools button.split { width: 36px; }
.right-tools .on { background: #cddeec; }
.right-tools .sep { margin: 0 3px; }
.price { width: 118px; height: 24px; margin-left: 4px; padding-right: 6px; background: #f1f1f1; border-radius: 2px; line-height: 24px; text-align: right; color: #111; }

/* Workspace */
.workspace { flex: 1; min-height: 0; display: flex; }
.dock { flex: none; width: 367px; display: flex; flex-direction: column; border-right: 1px solid #adadad; background: #f7f7f6; }
.dock-bar { flex: none; height: 29px; display: flex; align-items: center; border-bottom: 1px solid #adadad; padding-left: 5px; }
.dock-bar select { appearance: none; width: 191px; height: 24px; border: 1px solid #a9a9a9; border-radius: 3px; background: #fefefd; padding: 0 3px; }
.select-arrow { margin: 0 8px 0 -16px; pointer-events: none; }
.dock-bar button { width: 28px; height: 24px; display: flex; align-items: center; justify-content: center; }
.dock-bar .collapse { margin-left: auto; margin-right: 12px; }
.dock-body { flex: 1; min-height: 0; display: flex; }

/* Edit Graphics panel */
.panel { flex: 1; min-width: 0; border-right: 1px solid #adadad; }
.panel-head { height: 86px; background: #fefefd; border-bottom: 1px solid #adadad; padding: 16px 16px 0; }
.panel-title { display: flex; align-items: center; height: 24px; }
.panel-title h2 { flex: 1; margin-left: 8px; font-size: 13px; }
.panel-title button { margin-left: 10px; color: #555; }
.tabs { display: flex; gap: 9px; margin-top: 16px; }
.tabs button { height: 22px; padding: 0 2px; border-bottom: 3px solid transparent; line-height: 20px; }
.tabs .active { border-bottom-color: #356d96; }
.group { margin: 0 15px 0 14px; padding: 0 2px 15px; border-bottom: 1px solid #adadad; }
.group:last-child { border-bottom: 0; }
.group header { height: 32px; display: flex; align-items: center; padding: 0 1px 0 2px; color: #555; }
.group h3 { flex: 1; margin-left: 6px; font-size: 12px; font-weight: 600; color: #111; }
.group header button { margin-left: 10px; }
.group h4 { height: 22px; line-height: 22px; }
.group h4.tight { height: 24px; margin-top: 8px; line-height: 24px; }
.group h4.spaced { height: 24px; margin-top: 12px; line-height: 24px; }
.btn, .tile { background: #fefefd; border: 1px solid #e3e3e5; border-radius: 3px; }
.btn { height: 28px; display: flex; align-items: center; justify-content: center; gap: 4px; }
.wide { width: 100%; }
.pair { display: grid; grid-template-columns: 1fr 1fr; gap: 8px; }
.radios { display: flex; gap: 14px; height: 22px; margin-bottom: 10px; }
.radios label { display: flex; align-items: center; gap: 6px; }
.radios input { appearance: none; width: 13px; height: 13px; margin-left: 2px; border: 2px solid #444; border-radius: 50%; background: #fff; }
.radios input:checked { border-color: #2f6b98; background: radial-gradient(circle, #2f6b98 0 3px, #fff 3px); }
.tiles { display: grid; grid-template-columns: repeat(4, 1fr); gap: 8px; }
.tile { height: 64px; padding: 6px 2px 0; display: flex; flex-direction: column; align-items: center; line-height: 13px; }
.tile svg { width: 22px; height: 22px; flex: none; }
.tile span { height: 30px; display: flex; align-items: center; justify-content: center; text-align: center; }
.tile:disabled { color: #8c8c8c; }
.tile:disabled svg { opacity: .4; }

/* Icon rail */
.rail { flex: none; width: 52px; background: #fefefd; }
.rail-group { background: #f7f7f6; border-bottom: 1px solid #e0e0e0; margin-bottom: -2px; }
.rail button { width: 100%; height: 34px; display: flex; align-items: center; justify-content: center; }
.rail svg { width: 24px; height: 24px; }
.rail .current { background: #cddeec; }
.rail .more::after { content: ""; width: 3px; height: 3px; margin: 0 2px 0 9px; border-radius: 50%; background: #888; }
.rail .more svg { margin-left: 14px; }

/* Stage */
.stage { flex: 1; min-width: 0; display: flex; flex-direction: column; }
.canvas { flex: 1; min-height: 0; position: relative; }
.drawing { position: absolute; left: 308px; top: 224px; }
.float-bar { position: absolute; left: 4px; top: 4px; height: 32px; padding-left: 1px; display: flex; align-items: center; border: 1px solid #adadad; border-radius: 3px; background: #f7f7f6; }
.float-bar button { width: 29px; display: flex; justify-content: center; }
.float-bar button svg { width: 20px; height: 20px; }
.float-bar .sep { margin: 0 3px 0 2px; }
.options { position: absolute; left: 4px; top: 37px; width: 259px; padding: 1px 2px 2px; border-radius: 4px; background: #d6ead7; color: #1c2b1e; }
.options-head { height: 19px; display: flex; align-items: center; gap: 4px; padding: 0 2px 0 5px; }
.options-head a { color: #8a9a8c; }
.options-head span { flex: 1; height: 1px; background: #bdd8cc; }
.row { height: 20px; display: flex; align-items: center; padding-right: 6px; }
.row label { flex: none; width: 132px; padding-left: 5px; }
.row input, .row button { flex: 1; min-width: 0; height: 18px; padding: 0 3px; border: 1px solid #c8dfca; background: #d6ead7; color: #111; text-align: left; border-radius: 0; }
.row input:disabled { color: #7d8f80; }
.row button { display: flex; align-items: center; gap: 3px; }
.row i { width: 13px; height: 13px; margin-top: -4px; background: #bdbdbd; }
.in1 label { width: 138px; padding-left: 15px; }
.in2 label { width: 144px; padding-left: 25px; }
.in3 label { width: 150px; padding-left: 35px; }
.selected { background: #a0cfa3; border-radius: 4px; }
.selected label { text-decoration: underline; }
.selected input { background: #fefefd; border-color: #fefefd; }
.selected button { flex: none; width: 17px; height: 18px; padding: 0; background: #fff; border: 1px solid #88a; }
.more-props { display: block; height: 20px; margin: 1px 0 0 132px; padding: 0 2px; border: 1px solid #b4d3b6; color: #111; }

/* View tabs and floors */
.viewbar { flex: none; height: 25px; display: flex; border-top: 1px solid #adadad; border-bottom: 1px solid #666; }
.viewbar button { padding: 0 14px 2px; border-top: 3px solid transparent; }
.viewbar .active { background: #cddeec; border-top-color: #356d96; }
.viewbar .dots { padding: 0 8px; }
.modes { display: flex; margin-left: auto; }
.modes button { padding: 0 11px 2px; }
.modes .active { padding: 0 12px 2px; }
.floors { flex: none; height: 23px; display: grid; grid-template-columns: repeat(3, 1fr); }
.floors button { background: #bebde0; border-right: 1px solid #555; }
.floors .active { border: 3px solid #000; }
.floors button:last-child { border-right: 0; }

.pointer { position: absolute; left: 182px; top: 620px; pointer-events: none; }
```
